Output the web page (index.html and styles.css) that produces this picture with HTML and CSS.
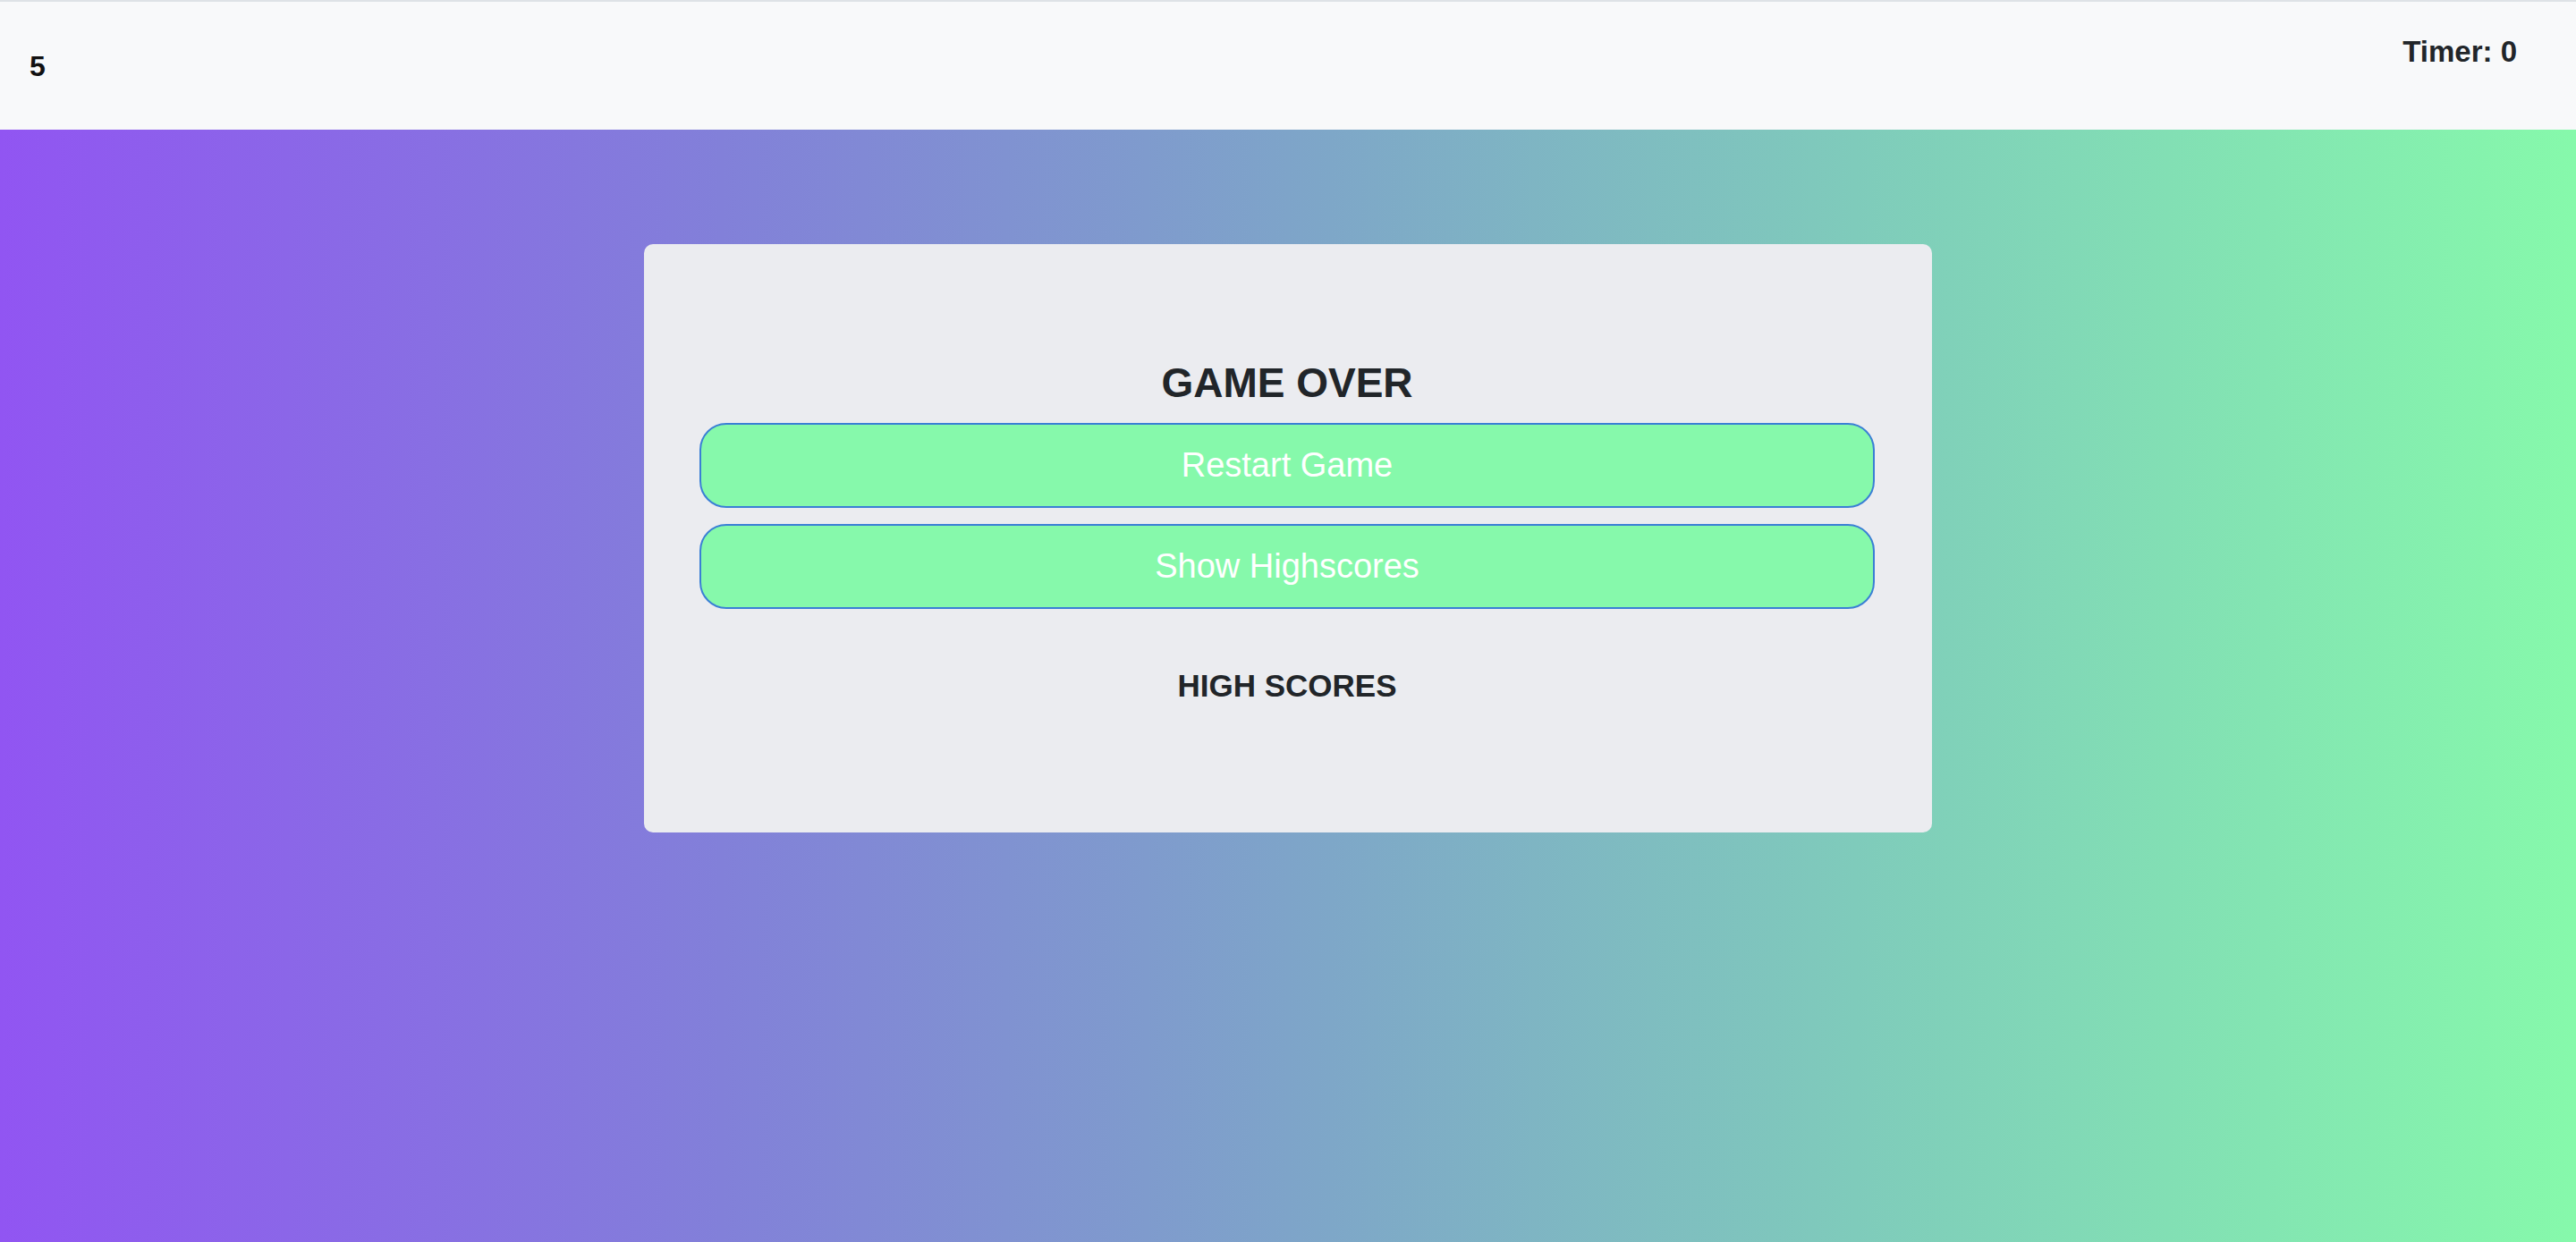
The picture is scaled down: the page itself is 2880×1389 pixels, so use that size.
FILE: index.html
```html
<!DOCTYPE html>
<html lang="en">
<head>
<meta charset="utf-8">
<title>Game Over</title>
<link rel="stylesheet" href="styles.css">
</head>
<body>
<header class="topbar">
  <div class="score">5</div>
  <div class="timer">Timer: 0</div>
</header>
<main class="stage">
  <section class="card">
    <h2 class="title">GAME OVER</h2>
    <div class="actions">
      <button class="btn">Restart Game</button>
      <button class="btn">Show Highscores</button>
    </div>
    <h3 class="subtitle">HIGH SCORES</h3>
  </section>
</main>
</body>
</html>
```
FILE: styles.css
```css
html, body {
  margin: 0;
  padding: 0;
  height: 100%;
}
body {
  font-family: "Liberation Sans", Arial, sans-serif;
  display: flex;
  flex-direction: column;
  color: #212529;
}
.topbar {
  box-sizing: border-box;
  height: 145px;
  background: #f8f9fa;
  border-top: 2px solid #dee2e6;
  display: flex;
  justify-content: space-between;
  align-items: flex-start;
  padding: 0 66px 0 33px;
  flex: none;
}
.score {
  font-size: 32px;
  line-height: 38px;
  font-weight: 700;
  color: #111;
  margin-top: 53px;
}
.timer {
  font-size: 33px;
  line-height: 40px;
  font-weight: 700;
  color: #212529;
  margin-top: 36px;
}
.stage {
  flex: 1;
  background: linear-gradient(to right, #9155f2 0%, #8280d9 28%, #7ea4c9 50%, #7fcbbb 72%, #86f9ab 100%);
  display: flex;
  justify-content: center;
  align-items: flex-start;
  padding-top: 128px;
}
.card {
  box-sizing: border-box;
  width: 1440px;
  height: 658px;
  background: #ebecf0;
  border-radius: 10px;
  padding: 128px 64px 0 62px;
  display: flex;
  flex-direction: column;
  align-items: stretch;
}
.title {
  margin: 0;
  text-align: center;
  font-size: 46px;
  line-height: 55px;
  font-weight: 700;
  color: #212529;
}
.actions {
  margin-top: 17px;
  display: flex;
  flex-direction: column;
  gap: 18px;
}
.btn {
  box-sizing: border-box;
  height: 95px;
  width: 100%;
  background: #86f9ab;
  border: 2px solid #3a7fd5;
  border-radius: 30px;
  color: #ffffff;
  font-family: "Liberation Sans", Arial, sans-serif;
  font-size: 38px;
  font-weight: 400;
  padding: 0;
  cursor: pointer;
}
.subtitle {
  margin: 65px 0 0;
  text-align: center;
  font-size: 35px;
  line-height: 42px;
  font-weight: 700;
  color: #212529;
}
```
